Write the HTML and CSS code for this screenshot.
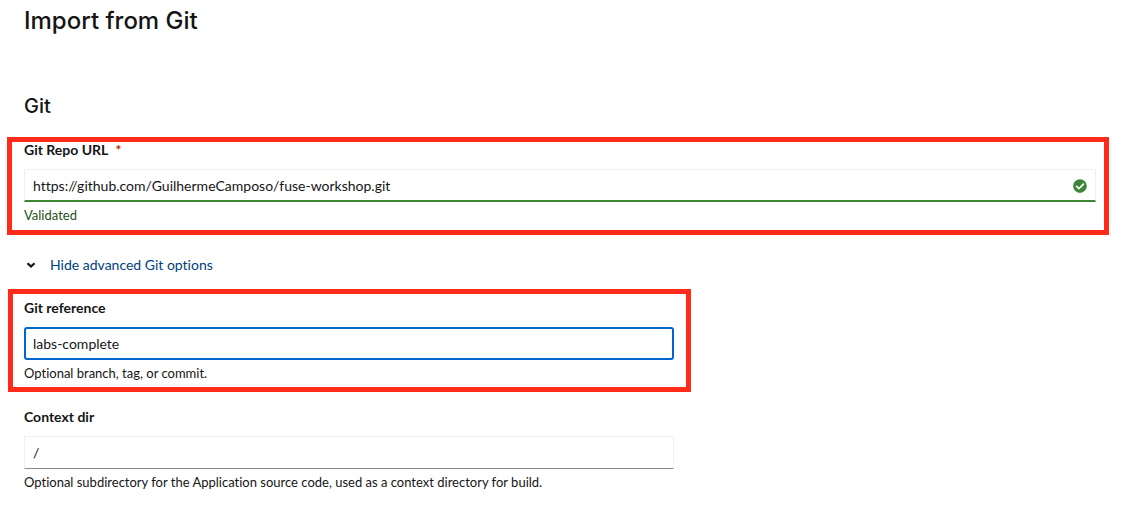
FILE: index.html
```html
<!DOCTYPE html>
<html lang="en">
<head>
<meta charset="utf-8">
<title>Import from Git</title>
<link rel="stylesheet" href="styles.css">
</head>
<body>
<main class="page">
  <h1 class="page-title">Import from Git</h1>
  <form class="form">
    <h2 class="section-title">Git</h2>
    <div class="group group-marked group-wide">
      <label class="label" for="repo">Git Repo URL <span class="required">*</span></label>
      <div class="control">
        <input class="input input-valid" id="repo" type="text" value="https://github.com/GuilhermeCamposo/fuse-workshop.git" aria-describedby="repo-help">
        <svg class="check" viewBox="0 0 512 512" aria-hidden="true"><path fill="#3e8635" d="M504 256c0 137-111 248-248 248S8 393 8 256 119 8 256 8s248 111 248 248zM227.300 387.300l184-184c6.200-6.200 6.200-16.400 0-22.600l-22.600-22.600c-6.200-6.200-16.400-6.200-22.600 0L216 308.100l-70.100-70.100c-6.200-6.200-16.400-6.200-22.600 0l-22.600 22.600c-6.200 6.200-6.200 16.400 0 22.600l104 104c6.200 6.300 16.400 6.300 22.600.1z"/></svg>
      </div>
      <p class="help help-valid" id="repo-help">Validated</p>
    </div>
    <button class="toggle" type="button" aria-expanded="true">
      <svg class="chevron" viewBox="0 0 10 8" aria-hidden="true"><path d="M1.500 2.300l3.500 3.300 3.500-3.300" fill="none" stroke="#151515" stroke-width="2.200" stroke-linecap="butt" stroke-linejoin="miter"/></svg>
      Hide advanced Git options
    </button>
    <div class="group group-marked group-narrow">
      <label class="label" for="ref">Git reference</label>
      <input class="input input-focus" id="ref" type="text" value="labs-complete" aria-describedby="ref-help">
      <p class="help" id="ref-help">Optional branch, tag, or commit.</p>
    </div>
    <div class="group group-narrow group-last">
      <label class="label" for="dir">Context dir</label>
      <input class="input" id="dir" type="text" value="/" aria-describedby="dir-help">
      <p class="help" id="dir-help">Optional subdirectory for the Application source code, used as a context directory for build.</p>
    </div>
  </form>
</main>
</body>
</html>
```
FILE: styles.css
```css
* { box-sizing: border-box; }
body { margin: 0; background: #fff; color: #151515; font: 13px/18px Lato, "Open Sans", sans-serif; font-variant-ligatures: none; }
.page { padding: 5px 29px 0 7px; }
.page-title { margin: 0 17px; font-size: 24px; line-height: 32px; font-weight: 500; font-family: Inter, sans-serif; }
.form { margin-top: 56px; }
.section-title { margin: 0 17px 18px; font-size: 20px; line-height: 26px; font-weight: 500; font-family: Inter, sans-serif; }
.group { display: flex; flex-direction: column; border: 5px solid transparent; }
.group-marked { border-color: #fe2b1b; }
.group-wide { padding: 0 8px 1px 12px; }
.group-narrow { width: 62%; margin-left: 1px; padding: 6px 12px 0 11px; }
.label { font-size: 14px; line-height: 16px; font-weight: 700; margin-bottom: 11px; }
.required { color: #c9190b; margin-left: 4px; }
.control { display: grid; align-items: center; }
.control > * { grid-area: 1 / 1; }
.input { width: 100%; height: 33px; padding: 0 8px; border: 1px solid #f0f0f0; border-bottom-color: #8a8d90; background: #fff; color: #151515; font: inherit; font-size: 14px; font-variant-ligatures: none; outline: 0; }
.input-valid { border-bottom: 2px solid #3e8635; }
.input-focus { padding: 0 7px; border: 2px solid #0066cc; border-radius: 3px; }
.check { justify-self: end; width: 14px; height: 14px; margin-right: 9px; }
.help { margin: 4px 0 5px; }
.help-valid { color: #1e4f18; }
.toggle { display: flex; align-items: center; gap: 14px; margin: 20px 0 14px; padding: 0 19px; border: 0; background: none; color: #004080; font: inherit; font-size: 14px; line-height: 20px; font-variant-ligatures: none; }
.chevron { width: 10px; height: 8px; }
.group-last { margin-top: 6px; }
```
